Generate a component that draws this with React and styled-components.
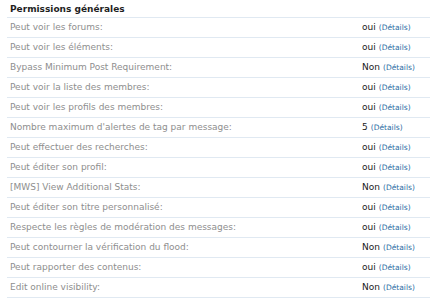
import React from 'react'
import styled, { createGlobalStyle } from 'styled-components'

const GlobalStyle = createGlobalStyle`
    html, body {
        margin: 0;
        padding: 0;
        background: #ffffff;
    }
    body {
        font-family: "DejaVu Sans", Verdana, sans-serif;
    }
`

const Page = styled.div`
    width: 430px;
    height: 300px;
    overflow: hidden;
    background: #ffffff;
    padding-left: 7px;
    box-sizing: border-box;
`

const Header = styled.h3`
    margin: 0;
    height: 17px;
    padding: 0 3px;
    font-size: 9px;
    font-weight: bold;
    color: #1f1f1f;
    line-height: 18px;
    border-bottom: 1px solid #e0e9f2;
`

const List = styled.dl`
    margin: 0;
`

const Row = styled.div`
    display: flex;
    align-items: center;
    height: 19px;
    border-bottom: 1px solid #e0e9f2;
    padding-left: 3px;
    line-height: 21px;
`

const Label = styled.dt`
    flex: 1;
    font-size: 9px;
    color: #8e8e8e;
`

const Value = styled.dd`
    margin: 0;
    width: 68px;
    font-size: 9px;
    color: #1a1a1a;
    white-space: nowrap;
`

const Details = styled.a`
    font-size: 7.5px;
    color: #2c6da3;
    text-decoration: none;
    margin-left: 3px;
`

const perms = [
    ['Peut voir les forums:', 'oui'],
    ['Peut voir les éléments:', 'oui'],
    ['Bypass Minimum Post Requirement:', 'Non'],
    ['Peut voir la liste des membres:', 'oui'],
    ['Peut voir les profils des membres:', 'oui'],
    ["Nombre maximum d'alertes de tag par message:", '5'],
    ['Peut effectuer des recherches:', 'oui'],
    ['Peut éditer son profil:', 'oui'],
    ['[MWS] View Additional Stats:', 'Non'],
    ['Peut éditer son titre personnalisé:', 'oui'],
    ['Respecte les règles de modération des messages:', 'oui'],
    ['Peut contourner la vérification du flood:', 'Non'],
    ['Peut rapporter des contenus:', 'oui'],
    ['Edit online visibility:', 'Non'],
]

export default function App() {
    return (
        <>
            <GlobalStyle />
            <Page>
                <Header>Permissions générales</Header>
                <List>
                    {perms.map(([label, value]) => (
                        <Row key={label}>
                            <Label>{label}</Label>
                            <Value>
                                {value}
                                <Details href="#">(Détails)</Details>
                            </Value>
                        </Row>
                    ))}
                </List>
            </Page>
        </>
    )
}
